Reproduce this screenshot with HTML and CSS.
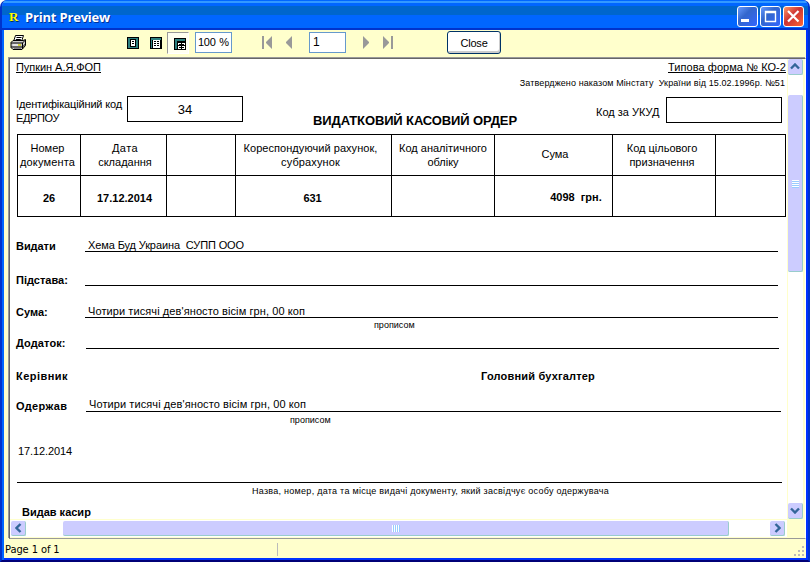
FILE: index.html
```html
<!DOCTYPE html>
<html lang="uk">
<head>
<meta charset="utf-8">
<title>Print Preview</title>
<link rel="stylesheet" href="styles.css">
</head>
<body>
<div class="window">
  <header class="titlebar">
    <span class="app-icon">R</span>
    <span class="t win-title">Print Preview</span>
    <div class="win-buttons">
      <span class="wb"><svg width="21" height="21"><rect x="4" y="13" width="8" height="3" fill="#fff"/></svg></span>
      <span class="wb"><svg width="21" height="21"><path d="M5.500 5.500h10v10h-10zM5 6.500h11" fill="none" stroke="#fff" stroke-width="1.4"/></svg></span>
      <span class="wb wb-close"><svg width="21" height="21"><path d="M5 5l10.500 10.500M15.500 5L5 15.500" stroke="#fff" stroke-width="2.2"/></svg></span>
    </div>
  </header>
  <div class="toolbar">
    <svg class="printer" width="17" height="16" viewBox="0 0 17 16">
      <path d="M5.500 .5h8l-2 6h-8z" fill="#fff" stroke="#000"/>
      <path d="M6.500 2.500h5M5.800 4.500h5" stroke="#000"/>
      <path d="M1 7.500l2-2h10l2.500-1v6l-3.500 4h-9l-2-2z" fill="#ccc" stroke="#000"/>
      <path d="M1 8h11.500l3-3M1 12h11.500l3-3M12.500 8v6" stroke="#000" fill="none"/>
      <path d="M3 10h7" stroke="#fff"/><path d="M8 10h3" stroke="#cc0" stroke-width="1.5"/>
      <path d="M4 13.500h7" stroke="#888"/>
    </svg>
    <svg class="page1" width="12" height="12" shape-rendering="crispEdges"><path d="M0 0h12v12H0z"/><path d="M1 1h10v10H1z" fill="#2d8080"/><path d="M3 2h6v8H3z"/><path d="M4 3h4v6H4z" fill="#fff"/><path d="M5 4h2v1H5zM5 6h2v1H5z"/></svg>
    <svg class="page2" width="12" height="12" shape-rendering="crispEdges"><path d="M0 0h12v12H0z"/><path d="M1 1h10v2H1zM1 3h1v8H1z" fill="#2d8080"/><path d="M3 3h7v8H3z" fill="#fff"/><path d="M4 4h2v1H4zM7 4h2v1H7zM4 6h2v1H4zM7 6h2v1H7zM4 8h2v1H4zM7 8h2v1H7z"/></svg>
    <span class="pressed"><svg width="12" height="12" shape-rendering="crispEdges"><path d="M0 0h12v12H0z"/><path d="M1 1h10v2H1zM1 3h2v8H1z" fill="#2d8080"/><path d="M4 4h7v7H4z" fill="#fff"/><path d="M4 4h7v1H4zM5 6h2v1H5zM8 6h2v1H8zM4 7h7v1H4zM7 5h1v6H7zM5 9h2v1H5zM8 9h2v1H8z"/></svg></span>
    <span class="field zoom">100 %</span>
    <svg class="nav first" width="10" height="13"><path d="M0 0h2v13H0zM10 0v13L4 7V6z"/></svg>
    <svg class="nav prev" width="6" height="13"><path d="M6 0v13L0 7V6z"/></svg>
    <span class="field page">1</span>
    <svg class="nav next" width="6" height="13"><path d="M0 0v13L6 7V6z"/></svg>
    <svg class="nav last" width="10" height="13"><path d="M8 0h2v13H8zM0 0v13L6 7V6z"/></svg>
    <button class="close">Close</button>
  </div>
  <div class="viewport">
    <main class="doc">
      <div class="r1"><span class="t u1">Пупкин А.Я.ФОП</span><span class="t u2">Типова форма № КО-2</span></div>
      <div class="r2"><span class="t s1">Затверджено наказом Мінстату&nbsp; України від 15.02.1996р. №51</span></div>
      <div class="r3">
        <div class="ident"><span class="t i1">Ідентифікаційний код</span><br><span class="t i2">ЕДРПОУ</span></div>
        <div class="box b34">34</div>
        <h1><span class="t h">ВИДАТКОВИЙ КАСОВИЙ ОРДЕР</span></h1>
        <span class="ukud t">Код за УКУД</span>
        <div class="box"></div>
      </div>
      <div class="grid">
        <div><p class="number"><span class="t">Номер</span><br><span class="t g2">документа</span></p></div>
        <div><p class="composed"><span class="t g3">Дата</span><br><span class="t">складання</span></p></div>
        <div></div>
        <div><p class="account"><span class="t g5">Кореспондуючий рахунок,</span><br><span class="t g6">субрахунок</span></p></div>
        <div><p><span class="t">Код аналітичного</span><br><span class="t">обліку</span></p></div>
        <div><p class="amount">Сума</p></div>
        <div><p class="purpose"><span class="t">Код цільового</span><br><span class="t">призначення</span></p></div>
        <div></div>
        <div class="b"><span class="t">26</span></div>
        <div class="b composed-value"><span class="t">17.12.2014</span></div>
        <div></div>
        <div class="b account-value"><span class="t v3">631</span></div>
        <div></div>
        <div class="b sum"><span class="t">4098&nbsp; грн.</span></div>
        <div></div><div></div>
      </div>
      <div class="row a1"><b class="t l1">Видати</b><div class="line"><span class="t x1">Хема Буд Украина&nbsp; СУПП ООО</span></div></div>
      <div class="row a2"><b class="t">Підстава:</b><div class="line"></div></div>
      <div class="row a3"><b class="t">Сума:</b><div class="line"><span class="t x2">Чотири тисячі дев'яносто вісім грн, 00 коп</span></div></div>
      <div class="note n1"><span class="t">прописом</span></div>
      <div class="row a4"><b class="t l4">Додаток:</b><div class="line"></div></div>
      <div class="row a5"><b class="t l5">Керівник</b><b class="t chief">Головний бухгалтер</b></div>
      <div class="row a6"><b class="t l7">Одержав</b><div class="line"><span class="t x2">Чотири тисячі дев'яносто вісім грн, 00 коп</span></div></div>
      <div class="note n2"><span class="t">прописом</span></div>
      <div class="date"><span class="t">17.12.2014</span></div>
      <div class="passport"><span class="t q">Назва, номер, дата та місце видачі документу, який засвідчує особу одержувача</span></div>
      <div class="cashier"><b class="t">Видав касир</b></div>
    </main>
    <div class="vscroll">
      <span class="arrow"><svg width="10" height="7"><path d="M1 5.500l4-4 4 4" /></svg></span>
      <span class="vthumb"><i></i><i></i><i></i><i></i></span>
      <span class="arrow down"><svg width="10" height="7"><path d="M1 1.500l4 4 4-4"/></svg></span>
    </div>
    <div class="hscroll">
      <span class="arrow"><svg width="7" height="10"><path d="M5.500 1l-4 4 4 4"/></svg></span>
      <span class="hthumb"><i></i><i></i><i></i><i></i></span>
      <span class="arrow right"><svg width="7" height="10"><path d="M1.500 1l4 4-4 4"/></svg></span>
    </div>
  </div>
  <footer class="status"><span class="pages t">Page 1 of 1</span>
    <svg class="grip" width="10" height="10"><path d="M8 0h2v2H8zM4 4h2v2H4zM8 4h2v2H8zM0 8h2v2H0zM4 8h2v2H4zM8 8h2v2H8z"/></svg>
  </footer>
</div>
</body>
</html>
```
FILE: styles.css
```css
* { box-sizing: border-box; }
body { margin: 0; background: #fff; font: 11px/14px "Liberation Sans", sans-serif; color: #000; }
.t { white-space: pre; display: inline-block; }

/* Window frame */
.window { width: 810px; height: 562px; display: flex; flex-direction: column; background: #ffc; border: solid #03c; border-width: 0 2px 2px; border-bottom-color: #007; border-radius: 7px 7px 0 0; overflow: hidden; box-shadow: inset 2px 0 #06f, inset -2px 0 #03f, inset 0 -2px #03f; }
.titlebar { height: 30px; flex: none; display: flex; align-items: center; padding: 3px 4px 0 7px; background: linear-gradient(#06f 0 1px, #39f 1px 3px, #06f 3px 6px, #06c 6px 15px, #06f 15px 28px, #03c 28px); }
.app-icon { width: 16px; color: #ff0; font: bold 13px "Liberation Serif", serif; text-shadow: 1px 1px #036; }
.win-title { font: bold 13px "Open Sans", sans-serif; letter-spacing: -.19px; color: #fff; text-shadow: 1px 1px #039; }
.win-buttons { margin-left: auto; display: flex; gap: 2px; }
.wb { width: 21px; height: 21px; border: 1px solid #fff; border-radius: 3px; background: linear-gradient(135deg, #69f, #36c 40%, #36f); }
.wb svg { display: block; margin: -1px; }
.wb-close { background: linear-gradient(135deg, #f96, #c33 45%, #f63); }

/* Toolbar */
.toolbar { height: 27px; flex: none; display: flex; align-items: flex-start; padding: 0 8px; }
.printer { margin-top: 5px; }
.page1 { margin: 7px 0 0 100px; }
.page2 { margin: 7px 0 0 11px; }
.pressed { width: 22px; height: 22px; margin: 2px 0 0 5px; padding: 6px 0 0 7px; background: #fffff0; border: 1px solid #fff; border-top-color: #999; border-left-color: #999; }
.pressed svg { display: block; margin: -1px; }
.field { background: #fff; border: 1px solid #69c; width: 37px; height: 21px; margin-top: 2px; padding: 2px 0 0 2px; font-size: 12px; line-height: 15px; white-space: nowrap; }
.zoom { margin-left: 6px; font-size: 11px; letter-spacing: -.3px; word-spacing: 1px; }
.page { margin-left: 17px; padding-left: 3px; }
.nav { fill: #999; margin-top: 6px; }
.first { margin-left: 30px; }
.prev, .last { margin-left: 14px; }
.next { margin-left: 17px; }
.close { width: 54px; height: 23px; margin: 1px 0 0 54px; padding: 0; background: #fff; border: 1px solid #036; border-radius: 3px; font: 11px "Liberation Sans", sans-serif; letter-spacing: -.2px; color: #000; box-shadow: inset -1px -2px #ccc; }

/* Scrolling page area */
.viewport { flex: none; height: 481px; margin: 1px 2px 0 7px; display: grid; grid-template: 460px 19px / 777px 18px; border: 1px solid; border-color: #666 #fff #999 #666; box-shadow: -1px -1px #999; background: #ffc; }
.doc { background: #fff; overflow: hidden; display: flex; flex-direction: column; padding-right: 1px; }
.doc > * { flex: none; }
.r1 { height: 17px; padding: 1px 0 0 6px; display: flex; justify-content: space-between; }
.r1 .t { text-decoration: underline; text-underline-offset: 1px; }
.u1 { letter-spacing: -.05px; }
.u2 { letter-spacing: .06px; }
.r2 { height: 20px; padding: 1px 1px 0 0; text-align: right; font-size: 9px; line-height: 13px; }
.s1 { letter-spacing: .1px; }
.r3 { height: 38px; padding-left: 6px; display: flex; }
.ident { width: 111px; padding-top: 1px; }
.i1 { letter-spacing: -.15px; }
.i2 { letter-spacing: -.39px; }
.box { width: 116px; height: 26px; border: 1px solid #000; }
.r3 .box:last-child { margin-top: 1px; }
.b34 { text-align: center; font-size: 13px; line-height: 26px; }
h1 { margin: 0 0 0 70px; width: 204px; font: bold 13px/16px "Liberation Sans", sans-serif; padding-top: 17px; }
.h { letter-spacing: -.12px; }
.ukud { width: 70px; margin: 9px 0 0 79px; }

/* Voucher table */
.grid { margin-left: 7px; width: 769px; height: 83px; display: grid; grid-template: 41px 41px / 63px 86px 69px 156px 103px 118px 103px 70px; border: solid #000; border-width: 1px 0 0 1px; }
.grid > div { border: solid #000; border-width: 0 1px 1px 0; display: flex; align-items: center; justify-content: center; text-align: center; }
.grid p { margin: 0; }
.grid .number { margin-right: 3px; }
.grid .composed { margin-left: 3px; }
.grid .account { margin-right: 6px; }
.grid .amount { margin: 0 0 3px 3px; }
.grid .purpose { margin-right: 4px; }
.g2 { letter-spacing: .15px; }
.g3 { letter-spacing: .4px; }
.g5 { letter-spacing: .05px; }
.g6 { letter-spacing: .13px; }
.b, b { font-weight: bold; }
.grid .b { padding-top: 4px; }
.grid .composed-value { padding-left: 2px; }
.grid .account-value { padding-right: 2px; }
.v3 { letter-spacing: -.12px; }
.grid .sum { padding: 2px 0 0 45px; }

/* Ruled lines */
.row { display: flex; align-items: flex-end; padding-left: 6px; }
.row b { width: 69px; margin-bottom: -1px; }
.line { width: 693px; height: 15px; border-bottom: 1px solid #000; padding-left: 3px; line-height: 16px; }
.a1 { height: 35px; }
.a2 { height: 34px; }
.a3 { height: 32px; }
.a4 { height: 18px; }
.a4 .line { margin-left: 1px; }
.a5 { height: 34px; }
.row.a5 b { margin-bottom: 0; }
.row .chief { width: 120px; margin-left: 396px; letter-spacing: .19px; }
.a6 { height: 29px; }
.a6 .line { width: 695px; margin-left: 1px; line-height: 14px; }
.l1 { letter-spacing: -.05px; }
.l4 { letter-spacing: .1px; }
.l5 { letter-spacing: .46px; }
.l7 { letter-spacing: .36px; }
.x1 { letter-spacing: -.11px; }
.x2 { letter-spacing: .09px; }
.note { height: 13px; padding-top: 2px; font-size: 9px; line-height: 11px; }
.n1 { padding-left: 364px; }
.n2 { padding: 3px 0 0 280px; }
.date { height: 57px; padding: 19px 0 0 8px; letter-spacing: -.1px; }
.passport { height: 22px; width: 765px; margin-left: 7px; border-top: 1px solid #000; padding: 3px 0 0 235px; font-size: 9px; line-height: 11px; }
.q { letter-spacing: .27px; }
.cashier { padding: 1px 0 0 12px; }

/* Scroll bars */
.vscroll { background: #fff; border-left: 1px solid #ffc; border-right: 2px solid #ffc; display: flex; flex-direction: column; }
.hscroll { background: #fff; border-top: 1px solid #ffc; border-bottom: 1px solid #ffc; display: flex; padding: 1px 0 1px 1px; }
.arrow { width: 15px; height: 15px; flex: none; display: grid; place-items: center; background: #ccf; border: solid #9cc; border-width: 0 1px 1px 0; border-radius: 2px; }
.arrow path { fill: none; stroke: #369; stroke-width: 2.4; }
.vscroll .arrow { height: 16px; }
.vthumb, .hthumb { background: #ccf; display: flex; align-items: center; justify-content: center; gap: 1px; border: solid #9cc; border-radius: 2px; }
.vthumb { width: 15px; height: 177px; margin-top: 20px; flex-direction: column; border-width: 0 1px 1px 0; }
.vthumb i { width: 7px; height: 1px; background: #fff; box-shadow: 0 1px #9cf; }
.hthumb { width: 666px; height: 15px; margin-left: 37px; border-width: 0 1px 1px 0; }
.hthumb i { width: 1px; height: 7px; background: #fff; box-shadow: 1px 0 #9cf; }
.down { margin-top: auto; }
.right { margin: 0 2px 0 auto; }

/* Status bar */
.status { height: 19px; display: flex; align-items: flex-start; padding: 4px 4px 0 3px; }
.pages { width: 273px; height: 13px; border-right: 1px solid #bbb; font: 11px/14px "DejaVu Sans Condensed", sans-serif; letter-spacing: -.08px; }
.grip { margin: 3px 0 0 auto; fill: #bbb; }
```
